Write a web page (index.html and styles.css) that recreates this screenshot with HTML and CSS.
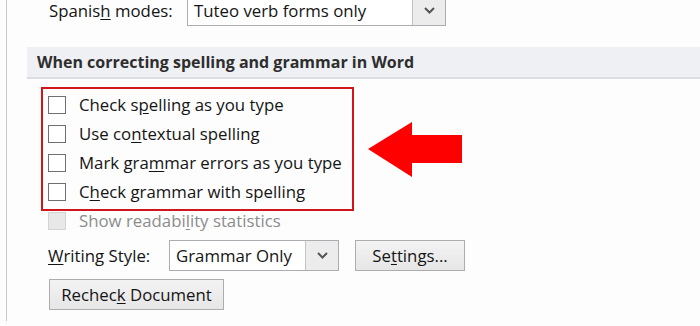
FILE: index.html
```html
<!DOCTYPE html>
<html lang="en">
<head>
    <meta charset="UTF-8">
    <meta name="viewport" content="width=device-width, initial-scale=1.0">
    <title>Proofing options</title>
    <link rel="stylesheet" href="styles.css">
</head>
<body>

    <div class="pane">
        <!-- Spanish modes -->
        <div class="field-row mode-row">
            <label class="field-label mode-label">Spanis<u>h</u> modes:</label>
            <div class="select mode-select">
                <span class="select-text">Tuteo verb forms only</span>
                <span class="select-btn">
                    <svg width="11" height="7" viewBox="0 0 11 7"><path d="M1 1 L5.5 5.5 L10 1" fill="none" stroke="#555" stroke-width="2"/></svg>
                </span>
            </div>
        </div>

        <div class="section-head">When correcting spelling and grammar in Word</div>

        <div class="options">
            <div class="option"><span class="check"></span><span>Check s<u>p</u>elling as you type</span></div>
            <div class="option"><span class="check"></span><span>Use co<u>n</u>textual spelling</span></div>
            <div class="option"><span class="check"></span><span>Mark gra<u>m</u>mar errors as you type</span></div>
            <div class="option"><span class="check"></span><span>C<u>h</u>eck grammar with spelling</span></div>
            <div class="option disabled"><span class="check"></span><span>Show readabi<u>l</u>ity statistics</span></div>
        </div>

        <!-- Writing style -->
        <div class="field-row style-row">
            <label class="field-label style-label"><u>W</u>riting Style:</label>
            <div class="select style-select">
                <span class="select-text">Grammar Only</span>
                <span class="select-btn">
                    <svg width="11" height="7" viewBox="0 0 11 7"><path d="M1 1 L5.5 5.5 L10 1" fill="none" stroke="#555" stroke-width="2"/></svg>
                </span>
            </div>
            <button class="btn settings-btn">Se<u>t</u>tings...</button>
        </div>

        <button class="btn recheck-btn">Rechec<u>k</u> Document</button>
    </div>

    <!-- annotation drawn over the dialog -->
    <div class="highlight-box"></div>
    <svg class="pointer-arrow" width="94" height="56" viewBox="0 0 94 56">
        <polygon points="0,27 44,0 44,13 94,13 94,41 44,41 44,55" fill="#ff0000"/>
    </svg>

</body>
</html>
```

FILE: styles.css
```css
body {
    margin: 0;
    padding: 0;
    background-color: #fdfdfd;
    font-family: "Open Sans", "Noto Sans", sans-serif;
    font-size: 16.8px;
    color: #141414;
    overflow: hidden;
}

u {
    text-underline-offset: 2px;
}

.pane {
    margin-left: 6px;
    border-left: 1px solid #c9c9c9;
    height: 326px;
    box-sizing: border-box;
}

.field-row {
    display: flex;
    align-items: center;
}

.mode-row {
    margin-top: -5px;
    padding-left: 42px;
}

.mode-label {
    width: 138px;
}

.select {
    display: flex;
    height: 31px;
    box-sizing: border-box;
    border: 1px solid #abadb3;
    background-color: #fff;
}

.select-text {
    flex: 1;
    display: flex;
    align-items: center;
    padding-left: 6px;
}

.select-btn {
    width: 32px;
    display: flex;
    align-items: center;
    justify-content: center;
    background-color: #ececec;
    border-left: 1px solid #c4c4c4;
}

.mode-select {
    width: 259px;
}

.section-head {
    margin: 21px 0 0 20px;
    height: 32px;
    box-sizing: border-box;
    padding-left: 10px;
    display: flex;
    align-items: center;
    background-color: #eff0f4;
    border-bottom: 2px solid #dcdde2;
    font-size: 16px;
    font-weight: bold;
    color: #2e2e2e;
}

.options {
    margin: 11px 0 0 41px;
}

.option {
    display: flex;
    align-items: center;
    height: 29px;
}

.check {
    width: 18px;
    height: 18px;
    box-sizing: border-box;
    border: 1px solid #707070;
    background-color: #fff;
    margin-right: 13px;
}

.option.disabled {
    color: #8c8c8c;
}

.option.disabled .check {
    border-color: #d4d4d4;
    background-color: #e8e8e8;
}

.style-row {
    margin-top: 5px;
    padding-left: 41px;
}

.style-label {
    width: 121px;
}

.style-select {
    width: 170px;
}

.btn {
    font-family: inherit;
    font-size: 16.8px;
    color: #141414;
    height: 31px;
    box-sizing: border-box;
    border: 1px solid #adadad;
    background: linear-gradient(#f3f3f3, #e6e6e6);
    padding: 0;
}

.settings-btn {
    margin-left: 16px;
    width: 110px;
}

.recheck-btn {
    display: block;
    margin: 8px 0 0 42px;
    width: 175px;
}

.highlight-box {
    position: absolute;
    left: 41px;
    top: 87px;
    width: 313px;
    height: 124px;
    box-sizing: border-box;
    border: 2px solid #d0151b;
}

.pointer-arrow {
    position: absolute;
    left: 368px;
    top: 122px;
}
```
